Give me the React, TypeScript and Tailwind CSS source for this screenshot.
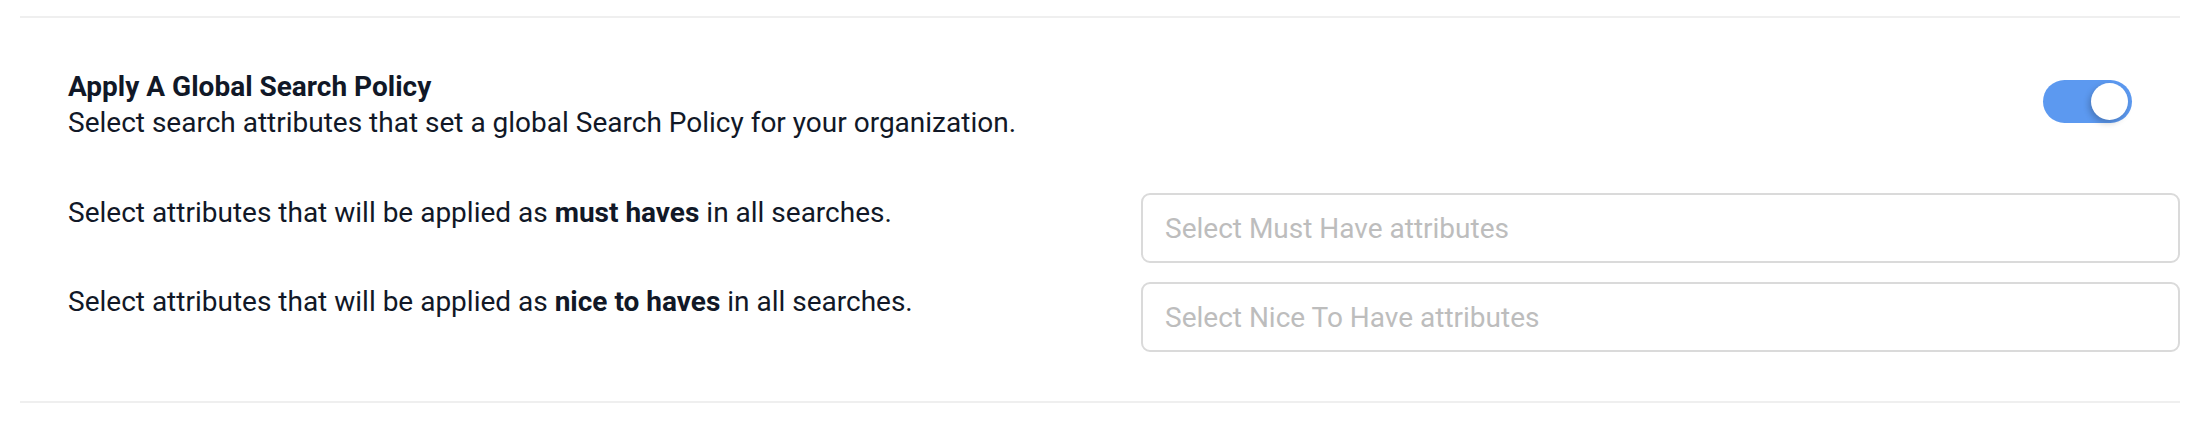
import React from 'react'

const rows = [
  { lead: 'Select attributes that will be applied as ', bold: 'must haves', placeholder: 'Select Must Have attributes' },
  { lead: 'Select attributes that will be applied as ', bold: 'nice to haves', placeholder: 'Select Nice To Have attributes' }
]

const App: React.FC = () => {
  return (
    <div className="min-h-screen bg-white pt-4 pl-5 pr-[14px] font-['Roboto','Liberation_Sans',sans-serif] text-[#111827]">
      <div className="h-[2px] bg-[#efefef]" />

      <div className="pl-12 pt-[51px] pb-[49px]">
        {/* header */}
        <div className="flex items-start justify-between pr-12">
          <div className="text-[28px] leading-[36px]">
            <h2 className="font-bold">Apply A Global Search Policy</h2>
            <p>Select search attributes that set a global Search Policy for your organization.</p>
          </div>
          <button className="mt-[11px] flex h-[43px] w-[89px] items-center justify-end rounded-full bg-[#5c99f0] pr-[4px]">
            <span className="block h-[37px] w-[37px] rounded-full bg-white shadow-[-2px_3px_6px_rgba(0,0,0,0.22)]" />
          </button>
        </div>

        {/* attribute rows */}
        <div className="mt-[52px] grid grid-cols-[1073px_1fr] gap-y-[19px]">
          {rows.map(row => (
            <React.Fragment key={row.bold}>
              <p className="pt-[2px] text-[28px] leading-[36px]">
                {row.lead}
                <span className="font-bold">{row.bold}</span> in all searches.
              </p>
              <input
                className="h-[70px] w-full rounded-[9px] border-2 border-[#dadada] px-[22px] text-[28px] outline-none placeholder:text-[#bdbdbd]"
                placeholder={row.placeholder}
              />
            </React.Fragment>
          ))}
        </div>
      </div>

      <div className="h-[2px] bg-[#efefef]" />
    </div>
  )
}

export default App
